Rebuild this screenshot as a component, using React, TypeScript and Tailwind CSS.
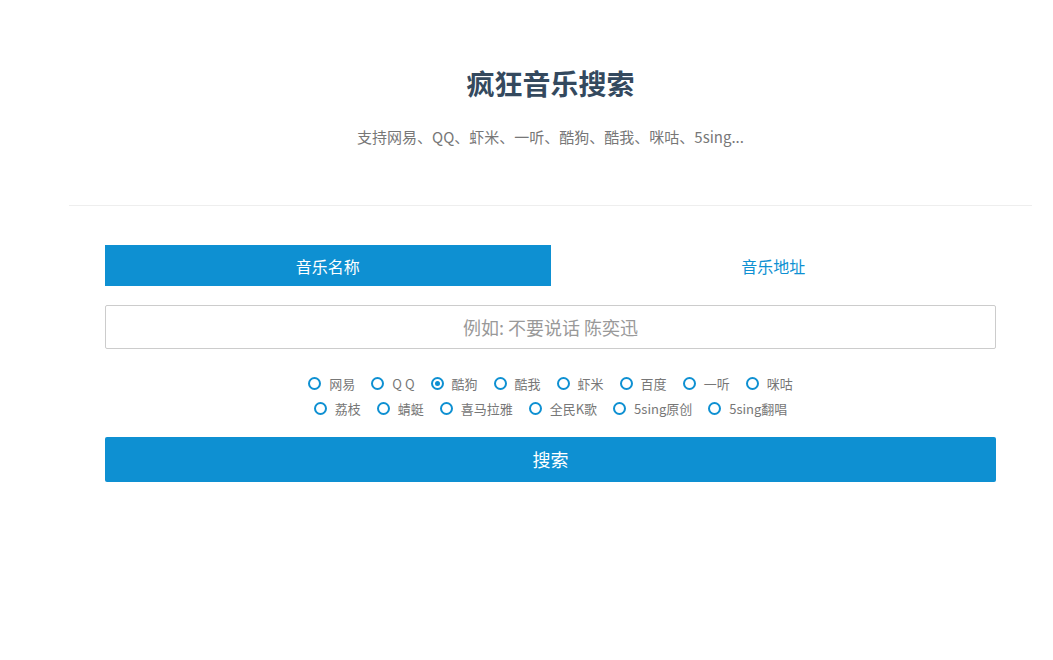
import React, { useState } from "react";

const ROW_ONE = ["网易", "Q Q", "酷狗", "酷我", "虾米", "百度", "一听", "咪咕"];
const ROW_TWO = ["荔枝", "蜻蜓", "喜马拉雅", "全民K歌", "5sing原创", "5sing翻唱"];

function Radio({ label, checked, onSelect }: { label: string; checked: boolean; onSelect: () => void }) {
  return (
    <label className="flex cursor-pointer items-center" onClick={onSelect}>
      <span className="flex h-[13px] w-[13px] items-center justify-center rounded-full border-2 border-[#0e90d2]">
        {checked && <span className="h-[5px] w-[5px] rounded-full bg-[#0e90d2]" />}
      </span>
      <span className="ml-[8px] text-[13px] text-[#777]">{label}</span>
    </label>
  );
}

export default function App() {
  const [tab, setTab] = useState(0);
  const [source, setSource] = useState("酷狗");

  return (
    <div className="min-h-screen bg-white font-['Noto_Sans_CJK_SC',sans-serif]">
      <div className="ml-[69px] w-[963px]">
        <header className="pt-[64px] text-center">
          <h1 className="text-[28px] font-bold leading-[38px] text-[#34495e]">疯狂音乐搜索</h1>
          <p className="mt-[25px] text-[15px] leading-[20px] text-[#777]">
            支持网易、QQ、虾米、一听、酷狗、酷我、咪咕、5sing...
          </p>
        </header>

        <hr className="mt-[58px] border-t border-[#eee]" />

        <form className="px-[36px] pt-[39px]" onSubmit={(e) => e.preventDefault()}>
          <div className="flex h-[41px]">
            {["音乐名称", "音乐地址"].map((name, i) => (
              <button
                key={name}
                type="button"
                onClick={() => setTab(i)}
                className={
                  tab === i
                    ? "flex-1 bg-[#0e90d2] text-[16px] text-white"
                    : "flex-1 bg-white text-[16px] text-[#0e90d2]"
                }
              >
                {name}
              </button>
            ))}
          </div>

          <input
            className="mt-[19px] block h-[44px] w-full rounded-[2px] border border-[#ccc] px-3 text-center text-[18px] text-[#555] outline-none placeholder:text-[#999]"
            placeholder="例如: 不要说话 陈奕迅"
          />

          <div className="mt-[22px]">
            {[ROW_ONE, ROW_TWO].map((row, r) => (
              <div key={r} className="flex h-[25px] items-center justify-center gap-x-[16px]">
                {row.map((s) => (
                  <Radio key={s} label={s} checked={source === s} onSelect={() => setSource(s)} />
                ))}
              </div>
            ))}
          </div>

          <button
            type="submit"
            className="mt-[16px] h-[45px] w-full rounded-[2px] bg-[#0e90d2] text-[18px] text-white"
          >
            搜索
          </button>
        </form>
      </div>
    </div>
  );
}
